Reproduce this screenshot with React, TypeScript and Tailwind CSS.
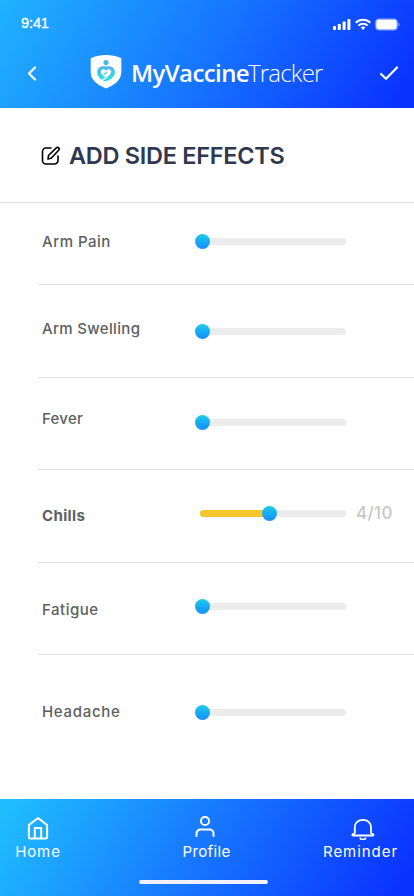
const ICON = { fill: 'none', stroke: 'currentColor', strokeLinecap: 'round', strokeLinejoin: 'round' } as const;

type Effect = {
  name: string;
  text: string;
  row: string;
  label: string;
  slider: string;
  value?: number;
};

const effects: Effect[] = [
  { name: 'Arm Pain', text: 'font-medium tracking-[0.5px]', row: 'h-[82px] border-b', label: 'mt-[27px]', slider: 'mt-[31px]' },
  { name: 'Arm Swelling', text: 'font-medium tracking-[0.33px]', row: 'h-[93px] border-b', label: 'mt-[32px]', slider: 'mt-[39px]' },
  { name: 'Fever', text: 'font-medium tracking-[0.25px]', row: 'h-[92px] border-b', label: 'mt-[29px]', slider: 'mt-[37px]' },
  { name: 'Chills', text: 'font-bold tracking-[0.35px]', row: 'h-[93px] border-b', label: 'mt-[34px]', slider: 'mt-[36px]', value: 4 },
  { name: 'Fatigue', text: 'font-medium tracking-[0.5px]', row: 'h-[92px] border-b', label: 'mt-[35px]', slider: 'mt-[36px]' },
  { name: 'Headache', text: 'font-medium tracking-[0.7px]', row: 'h-[144px]', label: 'mt-[45px]', slider: 'mt-[50px]' },
];

function StatusBar() {
  return (
    <div className="flex h-[46px] items-start justify-between pl-[21px] pr-[13px] text-white">
      <span className="mt-[14px] font-['Liberation_Sans',sans-serif] text-[14.5px] leading-[18px] tracking-[-0.1px] [-webkit-text-stroke:0.3px_white]">9:41</span>
      <svg className="mt-[18px]" width="68" height="13" viewBox="0 0 68 13" fill="currentColor">
        <rect x="0" y="8" width="3" height="4" rx="0.8" />
        <rect x="4.8" y="6" width="3" height="6" rx="0.8" />
        <rect x="9.6" y="3.5" width="3" height="8.5" rx="0.8" />
        <rect x="14.4" y="1" width="3" height="11" rx="0.8" />
        <path d="M22.7 4.7a10.5 10.5 0 0 1 14.6 0M25.4 7.6a6.6 6.6 0 0 1 9.2 0" fill="none" stroke="currentColor" strokeWidth="2" />
        <path d="M30 12 27.700 9.600a3.400 3.400 0 0 1 4.600 0z" />
        <rect x="42.5" y="0.9" width="22" height="11.2" rx="3.3" fill="none" stroke="currentColor" strokeOpacity="0.45" />
        <rect x="43.2" y="1.6" width="20.6" height="9.8" rx="2.4" />
        <path d="M65.500 4.500c1.700.7 1.700 3.300 0 4z" opacity="0.5" />
      </svg>
    </div>
  );
}

function Shield() {
  return (
    <svg width="32" height="34" viewBox="0 0 32 34">
      <defs>
        <linearGradient id="heart" x1="0" y1="0" x2="0" y2="1">
          <stop stopColor="#5ab4ea" />
          <stop offset="1" stopColor="#18e8e4" />
        </linearGradient>
      </defs>
      <path d="M16 0c4.800 0 10.600 1.100 15.300 3.300V17c0 8-6.500 13-15.300 16.500C7.200 30 .7 25 .7 17V3.300C5.400 1.100 11.200 0 16 0z" fill="white" />
      <circle cx="16" cy="7.500" r="2.600" fill="#4cb6e8" />
      <path d="M14.300 26.300c-4-2-7.200-5.300-7.200-9.100 0-3.800 3-5.900 5.900-5.900h6c2.900 0 5.900 2.100 5.900 5.900 0 4.200-4.300 7.100-8.600 9.100z" fill="url(#heart)" />
      <path d="M10.800 16.500c.5-2.700 3.600-2.900 5.200-.7 1.600-2.200 4.700-2 5.200.7.300 2.200-2.300 4.100-5.200 6.200-2.900-2.100-5.500-4-5.200-6.200z" fill="white" />
      <path d="M17.500 21.500l-5.800 4.300" fill="none" stroke="white" strokeWidth="1.500" />
      <path d="M13.300 19.100c1.600.2 2.700-.5 3.100-1.900" fill="none" stroke="#36cee8" strokeWidth="1.300" />
    </svg>
  );
}

function Header() {
  return (
    <header className="h-[108px] bg-[linear-gradient(120deg,#20b2ff_0%,#1775ff_50%,#0a31ff_97%)]">
      <StatusBar />
      <div className="flex h-[54px] items-center text-white">
        <svg className="ml-[24px]" width="16" height="16" viewBox="0 0 16 16" {...ICON} strokeWidth="2.200">
          <path d="M11 2.500 5 8.500l6 6" />
        </svg>
        <div className="ml-[50px] flex items-center">
          <div className="-mt-[3px]"><Shield /></div>
          <div className="ml-[9px] flex whitespace-nowrap font-['Open_Sans',sans-serif] text-[24px] leading-[32px]">
            <span className="w-[117px] font-semibold tracking-[-0.6px]">MyVaccine</span>
            <span className="font-light tracking-[-0.8px]">Tracker</span>
          </div>
        </div>
        <svg className="ml-auto mr-[15px]" width="20" height="16" viewBox="0 0 20 16" {...ICON} strokeWidth="2.200">
          <path d="m2 9 5 4.800L18 2.500" />
        </svg>
      </div>
    </header>
  );
}

function Slider({ value = 0 }: { value?: number }) {
  return (
    <div className="relative flex h-[15px] w-[151px] items-center">
      <div className="ml-[5px] h-[7px] flex-1 overflow-hidden rounded-full bg-[#ececec]">
        <div className="h-full bg-[#f4c62b]" style={{ width: value ? 69 : 0 }} />
      </div>
      <div
        className="absolute top-0 size-[15px] rounded-full bg-linear-to-b from-[#21cbe8] to-[#1c8cff]"
        style={{ left: (value / 10) * 167.5 }}
      />
    </div>
  );
}

function EffectRow({ effect }: { effect: Effect }) {
  return (
    <div className={`flex items-start border-[#e2e2e2] pl-1 ${effect.row}`}>
      <span className={`w-[153px] whitespace-nowrap text-[15px] leading-6 text-[#5c605f] ${effect.text} ${effect.label}`}>
        {effect.name}
      </span>
      <div className={effect.slider}>
        <Slider value={effect.value} />
      </div>
      {effect.value && (
        <span className="ml-[10px] mt-[31px] text-[17px] font-medium leading-6 tracking-[0.3px] text-[#c8c8c8]">{effect.value}/10</span>
      )}
    </div>
  );
}

function Navigation() {
  return (
    <nav className="flex h-[97px] flex-col items-center bg-[linear-gradient(120deg,#20c0ff_0%,#1775ff_50%,#0a31ff_97%)] text-white">
      <div className="flex h-[81px] w-full justify-between pl-[15px] pr-[16px] text-[15px] leading-6">
        <div className="flex w-[46px] flex-col items-center">
          <svg className="mt-[17px]" width="22" height="24" viewBox="0 0 22 24" {...ICON} strokeWidth="2">
            <path d="M11 2 1.900 9v12.200c0 .8.500 1.300 1.300 1.300h15.600c.8 0 1.300-.5 1.300-1.300V9zM7.800 22.500V12h6.400v10.500" />
          </svg>
          <span className="whitespace-nowrap tracking-[0.9px]">Home</span>
        </div>
        <div className="ml-[29px] flex w-[48px] flex-col items-center">
          <svg className="ml-[-3px] mt-[17px]" width="20" height="24" viewBox="0 0 20 24" {...ICON} strokeWidth="2">
            <circle cx="10" cy="5" r="4.100" />
            <path d="M1.500 20v-2.500a4 4 0 0 1 4-4h9a4 4 0 0 1 4 4V20" />
          </svg>
          <span className="whitespace-nowrap tracking-[0.35px]">Profile</span>
        </div>
        <div className="flex w-[75px] flex-col items-center">
          <svg className="ml-[4px] mt-[17px]" width="24" height="24" viewBox="0 0 24 24" {...ICON} strokeWidth="1.800">
            <path d="M3.800 17v-5.500c0-4.500 3.400-7.700 8.100-7.700s8.100 3.200 8.100 7.700V17l2.200 1.300c.5.500.2 1.200-.4 1.200H2c-.6 0-.9-.7-.4-1.200zM9.300 22.300c.8 1.600 4.400 1.600 5.200 0" />
          </svg>
          <span className="whitespace-nowrap tracking-[0.95px]">Reminder</span>
        </div>
      </div>
      <div className="ml-[-7px] h-[4px] w-[129px] rounded-full bg-[#f2f0fa]" />
    </nav>
  );
}

export default function App() {
  return (
    <div className="h-[896px] w-[414px] overflow-hidden bg-white font-[Inter,sans-serif]">
      <Header />
      <main>
        <div className="flex h-[95px] items-center border-b border-[#e0e0e0] pl-[41px] pt-[1px]">
          <svg width="20" height="20" viewBox="0 0 20 20" {...ICON} strokeWidth="1.600" className="text-black">
            <path d="M10 2H5a3.500 3.500 0 0 0-3.500 3.500v9A3.500 3.500 0 0 0 5 18h8.500a3.500 3.500 0 0 0 3.500-3.500V10M7 13l.5-3.500 7.800-7.600c1.600-1.500 3.900.6 2.300 2.300L10.200 12.300z" />
          </svg>
          <h1 className="ml-[8px] whitespace-nowrap text-[23.5px] font-semibold leading-8 tracking-[-0.28px] text-[#2f384f]">ADD SIDE EFFECTS</h1>
        </div>
        <div className="ml-[38px]">
          {effects.map((effect) => (
            <EffectRow key={effect.name} effect={effect} />
          ))}
        </div>
      </main>
      <Navigation />
    </div>
  );
}
